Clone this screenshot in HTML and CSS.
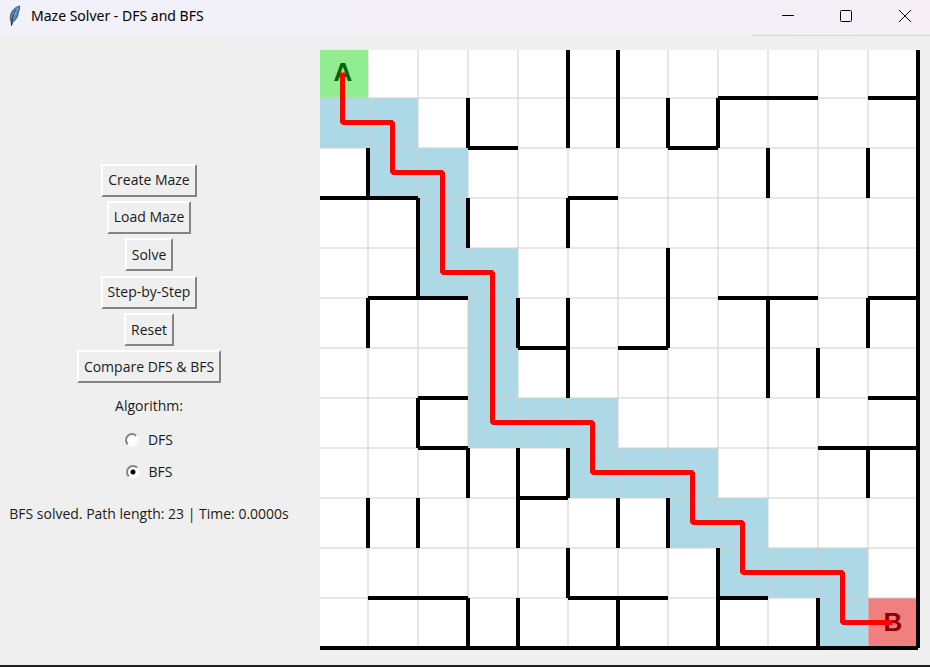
FILE: index.html
```html
<!DOCTYPE html>
<html lang="en">
<head>
<meta charset="utf-8">
<title>Maze Solver - DFS and BFS</title>
<link rel="stylesheet" href="styles.css">
</head>
<body>
<header class="titlebar">
  <svg class="feather" viewBox="0 0 14 22" aria-hidden="true">
    <path d="M11.600 1C8 1.800 4.500 4.500 3 8.500C2 11.500 2 14 3.200 17L3.500 20.500L4.600 17.500C8 15 9.600 12 10.300 8.500C10.800 6 11.800 3.500 11.600 1Z" fill="#4c86cc" stroke="#55585e"/>
    <path d="M10.500 2C7 5 5 9 4.200 14C6.800 10.500 8.500 6.500 10.500 2Z" fill="#a9c9ee"/>
    <path d="M8.500 4.500C5.500 8.500 4 13 3.500 20.500" fill="none" stroke="#26292e"/>
  </svg>
  <h1 class="title">Maze Solver - DFS and BFS</h1>
  <div class="controls">
    <button class="control" aria-label="Minimize"><svg viewBox="0 0 14 14"><path d="M1 6.500H13"/></svg></button>
    <button class="control" aria-label="Maximize"><svg viewBox="0 0 14 14"><rect x="1.500" y="1.500" width="11" height="11" rx="1"/></svg></button>
    <button class="control" aria-label="Close"><svg viewBox="0 0 14 14"><path d="M1 1L13 13M13 1L1 13"/></svg></button>
  </div>
</header>
<main class="window">
  <section class="panel">
    <div class="actions">
      <button class="action">Create Maze</button>
      <button class="action">Load Maze</button>
      <button class="action">Solve</button>
      <button class="action">Step-by-Step</button>
      <button class="action">Reset</button>
      <button class="action">Compare DFS &amp; BFS</button>
    </div>
    <fieldset class="algorithm">
      <legend class="legend">Algorithm:</legend>
      <label class="choice"><input type="radio" name="algorithm" value="dfs">DFS</label>
      <label class="choice"><input type="radio" name="algorithm" value="bfs" checked>BFS</label>
    </fieldset>
    <p class="status" role="status">BFS solved. Path length: 23 | Time: 0.0000s</p>
  </section>
  <svg class="maze" viewBox="2 2 600 600" role="img" aria-label="Solved maze from A to B">
    <path class="floor" d="M0 0H600V600H0Z"/>
    <!-- cells on the solved path -->
    <path class="visited" d="M0 50H100V100H150V200H200V350H300V400H400V450H450V500H550V600H500V550H400V500H350V450H250V400H150V250H100V150H50V100H0Z"/>
    <path class="start" d="M0 0H50V50H0Z"/>
    <path class="goal" d="M550 550H600V600H550Z"/>
    <path class="grid" d="M50 0V600M100 0V600M150 0V600M200 0V600M250 0V600M300 0V600M350 0V600M400 0V600M450 0V600M500 0V600M550 0V600M0 50H600M0 100H600M0 150H600M0 200H600M0 250H600M0 300H600M0 350H600M0 400H600M0 450H600M0 500H600M0 550H600"/>
    <path class="walls" d="M50 100V150M50 250V300M50 450V500M100 150V250M100 350V400M100 450V500M150 50V100M150 150V200M150 400V450M150 550V600M200 250V300M200 400V500M200 550V600M250 0V100M250 150V200M250 250V350M250 400V450M250 500V550M300 0V100M300 450V500M300 550V600M350 50V100M350 200V300M350 450V500M400 50V100M400 500V600M450 100V150M450 250V350M500 300V350M500 550V600M550 100V150M550 250V300M550 400V450M600 0V600"/>
    <path class="walls" d="M400 50H500M550 50H600M150 100H200M350 100H400M0 150H100M250 150H300M50 250H150M400 250H500M550 250H600M200 300H250M300 300H350M100 350H150M550 350H600M100 400H150M500 400H600M200 450H250M50 550H150M250 550H350M400 550H450M0 600H600"/>
    <text class="mark mark-start" x="25" y="33">A</text>
    <text class="mark mark-goal" x="575" y="583">B</text>
    <path class="route" d="M24.500 24.500V74.500H74.500V124.500H124.500V224.500H174.500V374.500H274.500V424.500H374.500V474.500H424.500V524.500H524.500V574.500H574.500"/>
  </svg>
</main>
</body>
</html>
```
FILE: styles.css
```css
* { box-sizing: border-box; }

body {
  margin: 0;
  min-height: 100vh;
  display: flex;
  flex-direction: column;
  background: #efefef;
  border-bottom: 2px solid #1c1c1c;
  color: #1a1a1a;
  font: 14px/20px "Open Sans", "Noto Sans", sans-serif;
}

.titlebar {
  display: flex;
  align-items: center;
  height: 36px;
  padding: 0 0 0 8px;
  gap: 9px;
  background: linear-gradient(90deg, #f2f0f8, #f3f0f7 80%, #f6eff6);
}
.feather { width: 14px; height: 22px; margin-bottom: 4px; }
.title { margin: 0 0 4px; font-family: "Noto Sans", sans-serif; font-size: 14px; font-weight: 400; color: #000; }
.controls {
  display: flex;
  height: 36px;
  margin-left: auto;
  padding-left: 7px;
  border-bottom: 1px solid #d9d6da;
}
.control {
  width: 58px;
  height: 32px;
  padding: 0;
  border: 0;
  background: none;
  display: grid;
  place-items: center;
}
.control:last-child { width: 50px; margin-left: 5px; }
.control svg { width: 14px; height: 14px; fill: none; stroke: #000; }

.window {
  flex: 1;
  display: grid;
  grid-template-columns: minmax(0, 1fr) minmax(0, 2fr);
  column-gap: 20px;
  padding: 14px 10px 14px 0;
}

.panel {
  display: flex;
  flex-direction: column;
  align-items: center;
  justify-content: center;
  padding: 0 2px 14px 0;
}
.actions {
  height: 220px;
  display: flex;
  flex-direction: column;
  align-items: center;
  justify-content: space-between;
}
.action {
  height: 33px;
  padding: 0 5px;
  border: 2px solid;
  border-color: #fff #848484 #848484 #fff;
  background: #efefef;
  color: inherit;
  font: inherit;
}
.algorithm {
  margin: 12px 0 0;
  padding: 0;
  border: 0;
  display: flex;
  flex-direction: column;
  align-items: center;
}
.legend { margin: 0 auto 8px; padding: 0; }
.choice { display: flex; align-items: center; gap: 9px; height: 32px; }
.choice input {
  appearance: none;
  width: 14px;
  height: 14px;
  margin: 0;
  border: 2px solid;
  border-color: #848484 #fafafa #fafafa #848484;
  border-radius: 50%;
  background: #fff;
}
.choice input:checked { background: radial-gradient(circle, #000 2px, #fff 3px); }
.status { margin: 16px 0 0; white-space: nowrap; }

.maze { display: block; width: 100%; }
.floor { fill: #fff; }
.visited { fill: #add8e6; }
.start { fill: #90ee90; }
.goal { fill: #f08080; }
.grid { stroke: #cecece; }
.walls { stroke: #000; stroke-width: 4; }
.route { fill: none; stroke: #f00; stroke-width: 5; stroke-linejoin: bevel; }
.mark { font: bold 26px "Liberation Sans", sans-serif; text-anchor: middle; }
.mark-start { fill: #006400; }
.mark-goal { fill: #8b0000; }
```
